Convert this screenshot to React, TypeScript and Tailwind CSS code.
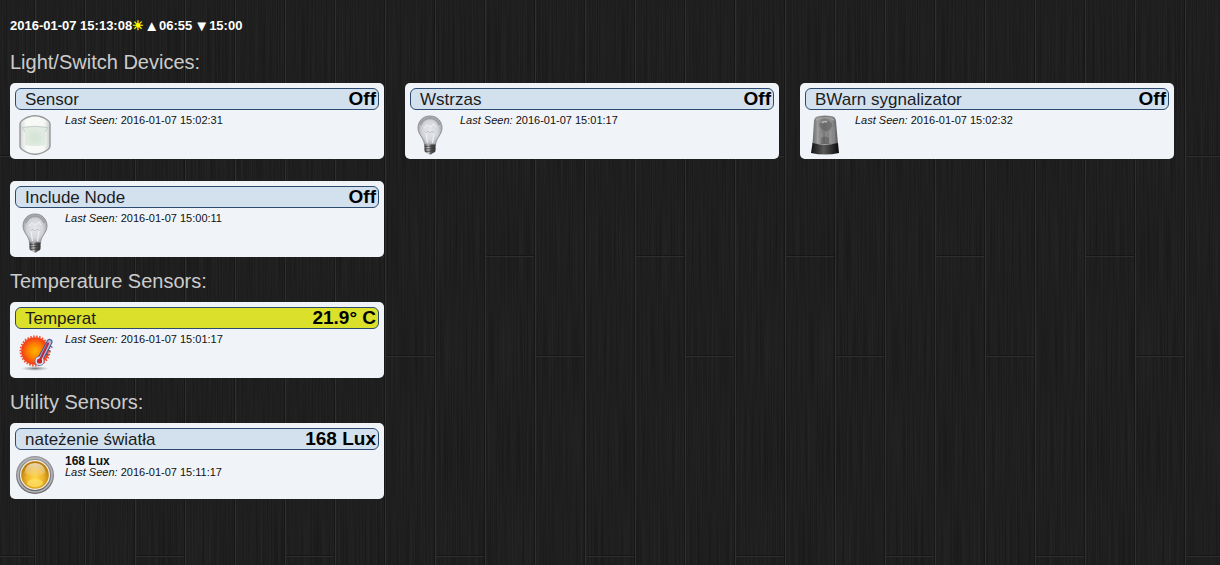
import React from 'react';

type IconName = 'motion' | 'bulb' | 'siren' | 'temperature' | 'lux';

interface Device {
  id: number;
  name: string;
  status: string;
  icon: IconName;
  lastSeen: string;
  data?: string;
  highlight?: boolean;
}

interface Section {
  title: string;
  devices: Device[];
}

const sections: Section[] = [
  {
    title: 'Light/Switch Devices:',
    devices: [
      { id: 1, name: 'Sensor', status: 'Off', icon: 'motion', lastSeen: '2016-01-07 15:02:31' },
      { id: 2, name: 'Wstrzas', status: 'Off', icon: 'bulb', lastSeen: '2016-01-07 15:01:17' },
      { id: 3, name: 'BWarn sygnalizator', status: 'Off', icon: 'siren', lastSeen: '2016-01-07 15:02:32' },
      { id: 4, name: 'Include Node', status: 'Off', icon: 'bulb', lastSeen: '2016-01-07 15:00:11' },
    ],
  },
  {
    title: 'Temperature Sensors:',
    devices: [
      { id: 5, name: 'Temperat', status: '21.9° C', icon: 'temperature', lastSeen: '2016-01-07 15:01:17', highlight: true },
    ],
  },
  {
    title: 'Utility Sensors:',
    devices: [
      { id: 6, name: 'nateżenie światła', status: '168 Lux', icon: 'lux', lastSeen: '2016-01-07 15:11:17', data: '168 Lux' },
    ],
  },
];

// Gradients shared by all device icons
const IconDefs: React.FC = () => (
  <svg className="absolute size-0" aria-hidden="true">
    <defs>
      <linearGradient id="motionBody" x1="0" x2="1" y1="0" y2="0">
        <stop offset="0" stopColor="#d3d5d4" />
        <stop offset="0.2" stopColor="#f8faf8" />
        <stop offset="0.8" stopColor="#f6f8f6" />
        <stop offset="1" stopColor="#cccfcd" />
      </linearGradient>
      <radialGradient id="motionLens">
        <stop offset="0" stopColor="#d3e4d5" />
        <stop offset="1" stopColor="#dfeae0" />
      </radialGradient>
      <radialGradient id="bulbGlass" cx="0.5" cy="0.5" r="0.55">
        <stop offset="0" stopColor="#e6e7eb" />
        <stop offset="0.6" stopColor="#d3d5da" />
        <stop offset="1" stopColor="#9a9ca1" />
      </radialGradient>
      <linearGradient id="bulbCap" x1="0" x2="1" y1="0" y2="0">
        <stop offset="0" stopColor="#3c3c3c" />
        <stop offset="0.35" stopColor="#c9c9c9" />
        <stop offset="0.6" stopColor="#555555" />
        <stop offset="1" stopColor="#333333" />
      </linearGradient>
      <linearGradient id="sirenGlass" x1="0" x2="1" y1="0" y2="0">
        <stop offset="0" stopColor="#6a6a6a" />
        <stop offset="0.2" stopColor="#9b9b9b" />
        <stop offset="0.45" stopColor="#777777" />
        <stop offset="0.75" stopColor="#8f8f8f" />
        <stop offset="1" stopColor="#5a5a5a" />
      </linearGradient>
      <linearGradient id="sirenBase" x1="0" x2="1" y1="0" y2="0">
        <stop offset="0" stopColor="#111111" />
        <stop offset="0.45" stopColor="#5a5a5a" />
        <stop offset="1" stopColor="#080808" />
      </linearGradient>
      <radialGradient id="sunFill">
        <stop offset="0" stopColor="#ffb400" />
        <stop offset="0.5" stopColor="#ff8200" />
        <stop offset="1" stopColor="#f3381c" />
      </radialGradient>
      <radialGradient id="shadowFill">
        <stop offset="0" stopColor="#555555" stopOpacity="0.8" />
        <stop offset="1" stopColor="#888888" stopOpacity="0" />
      </radialGradient>
      <linearGradient id="luxRing" x1="0" x2="0" y1="0" y2="1">
        <stop offset="0" stopColor="#99999c" />
        <stop offset="0.5" stopColor="#85858a" />
        <stop offset="1" stopColor="#66666b" />
      </linearGradient>
      <radialGradient id="luxFill" cx="0.5" cy="0.62" r="0.55">
        <stop offset="0" stopColor="#ffd94f" />
        <stop offset="0.55" stopColor="#eeb429" />
        <stop offset="1" stopColor="#b77b0c" />
      </radialGradient>
      <linearGradient id="luxGloss" x1="0" x2="0" y1="0" y2="1">
        <stop offset="0" stopColor="#ffffff" stopOpacity="0.7" />
        <stop offset="1" stopColor="#fff3c4" stopOpacity="0.15" />
      </linearGradient>
    </defs>
  </svg>
);

const DeviceIcon: React.FC<{ name: IconName }> = ({ name }) => (
  <svg viewBox="0 0 40 40" className="size-10 shrink-0" aria-hidden="true">
    {name === 'motion' && (
      <>
        <path d="M5 9Q5 7 7 5.500Q20 -4 33 5.500Q35 7 35 9V31Q35 33 33 34.500Q20 44 7 34.500Q5 33 5 31Z" fill="url(#motionBody)" stroke="#9b9b9e" strokeWidth="1.500" />
        <path d="M7 12.500Q20 10 33 12.500L30 17H10Z" fill="#e2eae3" stroke="#b9c7bc" strokeWidth="0.800" />
        <path d="M10 14H30V30Q20 32 10 30Z" fill="url(#motionLens)" />
        <path d="M13 17V30M27 17V30" stroke="#e3eee4" strokeWidth="0.600" />
      </>
    )}
    {name === 'bulb' && (
      <>
        <path d="M20 1C12.500 1 8 6.500 8 13C8 20 14 22.500 14.500 30H25.500C26 22.500 32 20 32 13C32 6.500 27.500 1 20 1Z" fill="url(#bulbGlass)" stroke="#8b8c91" strokeWidth="0.900" />
        <path d="M10.500 10Q13 3.500 20 3Q27 3.500 29.500 10" fill="none" stroke="#9fa0a6" strokeWidth="2" />
        <path d="M14 13L17 10L20 12L24 9L26 12" fill="none" stroke="#ececf0" strokeWidth="1.200" />
        <path d="M17.500 28L16 18M22.500 28L24 18" fill="none" stroke="#f1f1f4" strokeWidth="1.200" />
        <path d="M16 18L18 16L20 18L22 16L24 18" fill="none" stroke="#b5b6bb" strokeWidth="0.700" />
        <path d="M14.500 29.500H25.500V36Q25 37.500 23 38L21 39.500H19L17 38Q15 37.500 14.500 36Z" fill="url(#bulbCap)" />
        <path d="M14.500 31.500L25.500 30.800M14.500 34L25.500 33.300M15 36.500L25 35.800" stroke="#333333" strokeWidth="0.700" />
      </>
    )}
    {name === 'siren' && (
      <>
        <path d="M9 6Q9.500 1.500 14 1Q20 0 26 1Q30.500 1.500 31 6L33 29H7.500Z" fill="url(#sirenGlass)" />
        <path d="M11 5Q20 0.500 29 5" fill="none" stroke="#aaaaaa" strokeWidth="1.200" />
        <path d="M14 9Q20 3 27 8Q28 14 22 16Q15 16 14 9Z" fill="#5b5b5b" opacity="0.5" />
        <path d="M17 8Q19 5.500 22 7" fill="none" stroke="#d0d0d0" strokeWidth="1.500" opacity="0.8" />
        <path d="M13 12V28M17 18V28M21 17V28M25 16V28M29 12V28" stroke="#adadad" strokeWidth="0.700" opacity="0.6" />
        <path d="M16 23Q20 20 24 23V29H16Z" fill="#4b4b4b" opacity="0.4" />
        <path d="M7.500 28Q20 31 33 28L34 38Q20 41 6 38Z" fill="url(#sirenBase)" />
      </>
    )}
    {name === 'temperature' && (
      <>
        <ellipse cx="20" cy="34.500" rx="14" ry="2.500" fill="url(#shadowFill)" />
        <circle cx="20" cy="17" r="14.500" fill="none" stroke="#f4512d" strokeWidth="2" strokeDasharray="1.600 1.400" />
        <circle cx="20" cy="17" r="13.800" fill="url(#sunFill)" />
        <path d="M34.500 8L25 25.500" stroke="#44598c" strokeWidth="6" strokeLinecap="round" />
        <circle cx="24.500" cy="27" r="5" fill="#6d80ad" />
        <path d="M34.500 8L25.500 25" stroke="#aebbdc" strokeWidth="4" strokeLinecap="round" />
        <circle cx="24.500" cy="27" r="4" fill="#dfe7f5" />
        <path d="M33 9.500L25 26" stroke="#b82a42" strokeWidth="2.200" strokeLinecap="round" />
        <circle cx="24.500" cy="27" r="2.600" fill="#c9202a" />
        <path d="M35 12L37.500 13.500M33 16L35.500 17.500M31 20L33.500 21.500" stroke="#44598c" strokeWidth="1.200" />
      </>
    )}
    {name === 'lux' && (
      <>
        <circle cx="20" cy="20" r="19" fill="url(#luxRing)" />
        <circle cx="20" cy="20" r="17" fill="none" stroke="#b6b6ba" strokeWidth="1.500" />
        <circle cx="20" cy="20" r="15" fill="#f5efdc" />
        <circle cx="20" cy="20" r="13.800" fill="url(#luxFill)" />
        <path d="M9.500 18Q10 8.500 20 8Q30 8.500 30.500 18Q26 21 20 21Q14 21 9.500 18Z" fill="url(#luxGloss)" />
        <ellipse cx="20" cy="28" rx="8" ry="4" fill="#ffe368" opacity="0.7" />
      </>
    )}
  </svg>
);

// Dark wood planks, 50px wide, joints repeat every 150x400
const WoodBackground: React.FC = () => (
  <svg className="absolute inset-0 -z-10 size-full" aria-hidden="true">
    <defs>
      <filter id="grain" x="0" y="0" width="100%" height="100%" colorInterpolationFilters="sRGB">
        <feTurbulence type="fractalNoise" baseFrequency="0.8 0.01" numOctaves="1" seed="7" />
        <feColorMatrix values="0.075 0 0 0 0.083  0.075 0 0 0 0.083  0.075 0 0 0 0.083  0 0 0 0 1" />
      </filter>
      <pattern id="planks" width="150" height="400" patternUnits="userSpaceOnUse" x="35" y="0">
        <path d="M0.500 0V400M50.500 0V400M100.500 0V400" stroke="#303030" />
        <path d="M149.500 0V400M49.500 0V400M99.500 0V400" stroke="#161616" />
        <path d="M1 256.500H49M51 356.500H99M101 156.500H149" stroke="#2e2e2e" />
        <path d="M1 255.500H49M51 355.500H99M101 155.500H149" stroke="#161616" />
      </pattern>
    </defs>
    <rect width="100%" height="100%" filter="url(#grain)" />
    <rect width="100%" height="100%" fill="url(#planks)" />
  </svg>
);

const DeviceCard: React.FC<{ device: Device }> = ({ device }) => (
  <article className="flex h-19 flex-col rounded-[5px] bg-[#f0f4f9] p-[5px] text-[#111]">
    <header
      className={`flex h-[22px] items-start justify-between rounded-md border border-[#2c4a70] pr-0.5 pl-[9px] ${
        device.highlight ? 'bg-[#dbe02b]' : 'bg-[#d3e1ef]'
      }`}
    >
      <h3 className="text-[17px] leading-[22px] text-[#1c1c1c]">{device.name}</h3>
      <span className="text-[19px] leading-5 font-bold text-black">{device.status}</span>
    </header>
    <div className="flex gap-2.5 pt-[5px]">
      <DeviceIcon name={device.icon} />
      <div className="text-[11px] leading-[11px]">
        {device.data && <p className="text-xs leading-3 font-bold">{device.data}</p>}
        <p>
          <i>Last Seen:</i> {device.lastSeen}
        </p>
      </div>
    </div>
  </article>
);

const App: React.FC = () => (
  <div className="relative isolate min-h-screen bg-[#1e1e1e] pr-[46px] pl-2.5 font-['Liberation_Sans',Arial,sans-serif]">
    <WoodBackground />
    <IconDefs />

    <header className="flex items-center pt-[17px] pb-[3px] text-[13px] leading-[18px] font-bold text-white">
      <time>2016-01-07 15:13:08</time>
      <span className="text-[#ffff00]">☀</span>
      <span className="text-[15px]">▲</span>
      <time>06:55</time>
      <span className="ml-0.5 text-[15px]">▼</span>
      <time>15:00</time>
    </header>

    <main>
      {sections.map(section => (
        <section key={section.title}>
          <h2 className="pt-3 pb-[9px] text-xl leading-6 text-[#ccc]">{section.title}</h2>
          <div className="grid grid-cols-3 gap-x-[21px] gap-y-[22px]">
            {section.devices.map(device => (
              <DeviceCard key={device.id} device={device} />
            ))}
          </div>
        </section>
      ))}
    </main>
  </div>
);

export default App;
